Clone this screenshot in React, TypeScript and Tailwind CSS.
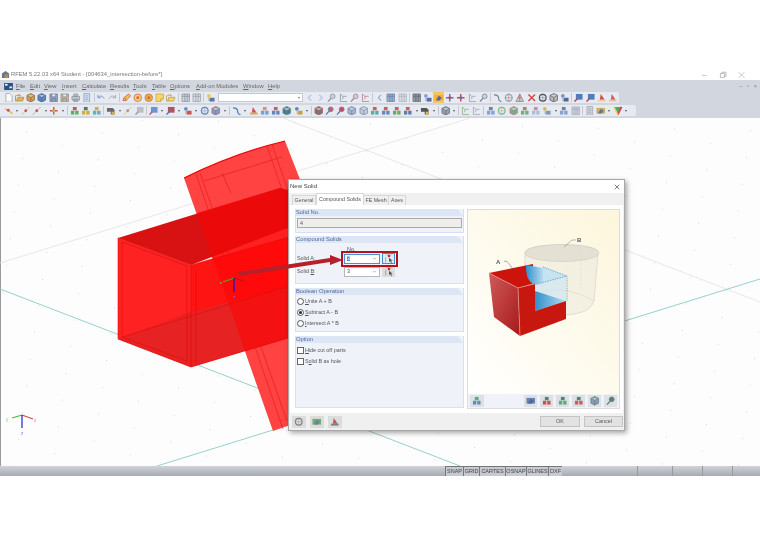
import { ReactNode } from "react";

const MENUS: [string, string][] = [
  ["File", "w-[14px]"],
  ["Edit", "w-[14px]"],
  ["View", "w-[18px]"],
  ["Insert", "w-[20px]"],
  ["Calculate", "w-[28px]"],
  ["Results", "w-[23px]"],
  ["Tools", "w-[19px]"],
  ["Table", "w-[18px]"],
  ["Options", "w-[26px]"],
  ["Add-on Modules", "w-[47px]"],
  ["Window", "w-[25px]"],
  ["Help", "w-[16px]"],
];

const ROW_ONE = [
  "page #fff #8a8f99", "fold #e0a92e #9a6a14", "box #c98a2a #7a4c10", "box #3f6fb5 #1f3f78", "save #7d8fb0 #4a5a78", "save #b5a68e #7d705c", "print #b7bcc6 #6d7480", "doc #cfe0f2 #5a7fb0", "|",
  "undo #5f82b8 #5f82b8", "undo2 #8d96a6 #8d96a6", "|",
  "pen #f0c020 #d02020", "disc #f2d040 #d04030", "disc #f09a20 #c05a10", "note #f4d24a #c08a10", "fold #f4d24a #a07a18", "|",
  "grid #c8ccd4 #6d7480", "grid #d6d9df #7d8490", "|", "node #f0c020 #3a5a90",
  "combo",
  "left #9ab4e0 #9ab4e0", "right #9ab4e0 #9ab4e0", "zoom #c8ccd8 #6d7a94", "corner #aab2c2 #6d7a94", "zoom #d8c0c8 #8d6a80", "corner #c8a8b0 #a06070", "|",
  "left #7a94c8 #3f5f98", "grid #8aa0c8 #42608f", "grid #d4d8e0 #9aa2b0", "|",
  "grid #7d8490 #3c424c", "node #6a8fe0 #3050a0", "sel #f0a830 #2a52b0", "cross #3058b0 #c02020", "cross #c02020 #3058b0", "corner #b8bcc8 #808898", "zoom #c8ccd8 #5a6a88", "|",
  "curve #c0c4cc #60687a", "ring #7a9ad0 #c05050", "tri #c0c4cc #a04040", "x #d02020 #404040", "ring #222 #667", "box #a8a8a8 #444", "node #5a82c8 #2a4a8a", "|",
  "sq #2a62b8 #c02020", "sq #2a62b8 #c02020", "flag #c82020 #f0c0a0", "flag #d83030 #f0b0a0",
];

const ROW_TWO = [
  "dot #e8b020 #c03030", "d", "line #d0a020 #c03030", "line #58a040 #c03030", "d", "cross #c03030 #d0a020", "d", "|",
  "tree #38a040 #c03030", "tree #c8a020 #306030", "tree #40a0b0 #c8a020", "|", "beam #4a4a4a #d0a020", "d", "line #d0a020 #8a8a8a", "sq #b0b4bc #808898", "|",
  "sq #4a80d0 #c03030", "d", "sq #a03040 #3060a0", "d", "node #4080c0 #c03030", "d", "ring #3870b0 #7090b0", "box #5a90d0 #b04040", "d", "|",
  "curve #3a3a3a #2060b0", "d", "flag #c03030 #d0a020", "tree #5a90c8 #d08060", "tree #3a70b8 #c04040", "box #1f5aa0 #4a7a40", "node #3a70b8 #c09020", "d", "|",
  "box #5a5a5a #a04040", "zoom #c04050 #405a90", "zoom #d02030 #405a90", "box #98a8c8 #506890", "box #b8c0d0 #6878a0", "tree #30a090 #c04040", "tree #3a70b8 #c04040", "tree #40a040 #c04040", "tree #406090 #c04040", "d", "beam #303030 #d8b020", "d", "|",
  "box #80909c #405060", "d", "|", "corner #a0b0a0 #60a060", "corner #b0b4bc #8a92a0", "|",
  "tree #6a90d0 #4070a0", "ring #50b0a0 #d0a030", "box #50a080 #c07050", "tree #50a070 #907050", "tree #9ab4d8 #b08090", "node #d0b030 #6a80a8", "d", "tree #6a90d0 #4070a0", "grid #c4cad6 #8a94aa", "|",
  "doc #c8ccd4 #8a92a0", "sel #c8a040 #405a90", "d", "rain #20a040 #d02020", "d",
];

function Glyph({ kind, a, b }: { kind: string; a: string; b: string }) {
  const shapes: Record<string, ReactNode> = {
    page: <path d="M2 .5h4l2.500 2.500v6.500h-6.500z" fill={a} stroke={b} strokeWidth=".8" />,
    fold: <path d="M.5 3V8.500h7.500l1.500-4H3l-1 4M.5 3h1l1-1h3v1.500" fill={a} stroke={b} strokeWidth=".7" />,
    box: <path d="M5 .5l4 2v5l-4 2-4-2v-5zM1 2.500l4 2 4-2M5 4.500v5" fill={a} stroke={b} strokeWidth=".8" />,
    save: <path d="M1 1h8v8H1zM3 1v3h4V1M3 9V6h4v3" fill={a} stroke={b} strokeWidth=".7" />,
    print: <path d="M3 1h4v2.500H3zM1 3.500h8v4H1zM3 6.500h4V9H3z" fill={a} stroke={b} strokeWidth=".7" />,
    doc: <path d="M2 .5h6v9H2zM3.500 3h3M3.500 5h3M3.500 7h3" fill={a} stroke={b} strokeWidth=".7" />,
    undo: <path d="M2 2v3h3M2.300 5C3.500 2.500 7.500 2.500 8.500 6" fill="none" stroke={a} strokeWidth="1" />,
    undo2: <path d="M8 2v3H5M7.700 5C6.500 2.500 2.500 2.500 1.500 6" fill="none" stroke={a} strokeWidth="1" />,
    pen: <path d="M1 8l1-3 5-4 2 2-5 5zM2.500 5l2.500 3" fill={a} stroke={b} strokeWidth=".8" />,
    disc: <g><circle cx="5" cy="5" r="4" fill={a} stroke={b} strokeWidth=".8" /><circle cx="5" cy="5" r="1.500" fill={b} /></g>,
    note: <path d="M1 1h8v5l-3 3H1zM6 9V6h3" fill={a} stroke={b} strokeWidth=".7" />,
    grid: <path d="M1 1h8v8H1zM1 3.500h8M4 1v8M6.500 1v8" fill={a} stroke={b} strokeWidth=".7" />,
    node: <g><circle cx="3" cy="3" r="2" fill={a} /><rect x="4" y="5" width="5" height="4" fill={b} /><path d="M3 5v3h1" fill="none" stroke={b} strokeWidth=".6" /></g>,
    left: <path d="M6.500 2L3.500 5l3 3" fill="none" stroke={a} strokeWidth="1.100" />,
    right: <path d="M3.500 2l3 3-3 3" fill="none" stroke={a} strokeWidth="1.100" />,
    zoom: <g><circle cx="6" cy="3.500" r="2.500" fill={a} stroke={b} strokeWidth=".8" /><path d="M4.200 5.500L1 9" stroke={b} strokeWidth="1.300" /></g>,
    corner: <path d="M1.500 1v8h7M1.500 1l2 2M4 3.500h4M4 3.500v3" fill="none" stroke={b} strokeWidth=".8" />,
    sel: <g><rect x=".5" y="2" width="9" height="6" fill={a} /><path d="M2 8l3-5 3 2-2 3z" fill={b} /></g>,
    cross: <g><path d="M5 1v8M1 5h8" stroke={a} strokeWidth="1.500" /><circle cx="5" cy="5" r="1.500" fill={b} /></g>,
    curve: <path d="M1 2c3 0 5 1 5 4 0 2 2 3 3 3" fill="none" stroke={b} strokeWidth="1.300" />,
    ring: <g><circle cx="5" cy="5" r="3.500" fill="none" stroke={a} strokeWidth="1.200" /><path d="M5 .5v9M.5 5h9" stroke={b} strokeWidth=".6" /></g>,
    tri: <path d="M5 1l4 8H1zM5 1v8M3 5h4" fill={a} stroke={b} strokeWidth=".7" />,
    x: <path d="M1.500 1.500l7 7M8.500 1.500l-7 7" stroke={a} strokeWidth="1.500" />,
    sq: <g><rect x="2" y="1" width="7" height="6" fill={a} /><path d="M.5 9l3-3" stroke={b} strokeWidth="1.500" /></g>,
    flag: <g><path d="M4 1l4 6H3z" fill={a} /><rect x="1" y="7" width="8" height="2" fill={b} /></g>,
    dot: <g><path d="M1 3l4 2 4 3" stroke={a} strokeWidth="1.500" /><circle cx="4.500" cy="4.500" r="1.500" fill={b} /></g>,
    line: <g><path d="M1 9l8-8" stroke={a} strokeWidth="1" strokeDasharray="2 1" /><circle cx="5" cy="5" r="1.500" fill={b} /></g>,
    tree: <g><rect x="1" y="5" width="3.500" height="4" fill={a} /><rect x="5.500" y="5" width="3.500" height="4" fill={a} /><rect x="3" y="1" width="4" height="3.500" fill={b} /></g>,
    beam: <g><path d="M1 2h6l2 2v5H5V6H1z" fill={a} /><rect x="6" y="6" width="3" height="3" fill={b} /></g>,
    rain: <g><path d="M1 1h8L5 9z" fill={a} /><path d="M5 9l4-8" stroke={b} strokeWidth="2" /><path d="M1 1l4 8" stroke="#f0d020" strokeWidth="1.500" /></g>,
  };
  return (
    <svg viewBox="0 0 10 10" className="h-[9.500px] w-[9.500px] opacity-80">
      {shapes[kind]}
    </svg>
  );
}

function Toolbar({ items, className }: { items: string[]; className: string }) {
  return (
    <div className={`flex h-[11px] items-center rounded-r-[2px] bg-[#e7eaf0] pl-[3px] ${className}`}>
      {items.map((token, i) => {
        if (token === "|") {
          return (
            <span key={i} className="flex w-[3px] justify-center">
              <span className="h-[9px] w-px bg-[#c4c8d0]" />
            </span>
          );
        }
        if (token === "d") {
          return (
            <span key={i} className="flex w-[6px] justify-center">
              <span className="h-0 w-0 border-x-[1.500px] border-t-[2px] border-x-transparent border-t-[#555]" />
            </span>
          );
        }
        if (token === "combo") {
          return (
            <span key={i} className="mx-[1.400px] flex h-[9px] w-[85px] items-center justify-end border border-[#c4c8d0] bg-white pr-[2px]">
              <span className="h-0 w-0 border-x-[1.500px] border-t-[2px] border-x-transparent border-t-[#777]" />
            </span>
          );
        }
        const [kind, a, b] = token.split(" ");
        return (
          <span key={i} className={`flex h-[11px] w-[11.200px] items-center justify-center ${a === "#f0a830" ? "bg-[#f6c65e]" : ""}`}>
            <Glyph kind={kind} a={a} b={b} />
          </span>
        );
      })}
    </div>
  );
}

function Viewport() {
  const dots: ReactNode[] = [];
  for (let i = -24; i < 24; i++) {
    for (let j = -8; j < 16; j++) {
      const x = 674 - 40 * i - 4 * j;
      const y = 128 + 12.7 * i + 26.7 * j;
      if (x > 0 && x < 760 && y > 117 && y < 465) {
        dots.push(<rect key={`${i}-${j}`} x={x} y={y} width="1" height="1" fill="#d8d8d8" />);
      }
    }
  }
  const slanted = "M184 177Q235 152 285 140L322 235V420L287 425L273 430Z";
  return (
    <svg viewBox="0 117 760 348" className="absolute inset-0 h-full w-full">
      {dots}
      <rect x="0" y="117" width="1" height="348" fill="#9a9a9a" />
      <path d="M0 262L470 117" stroke="#e2e2e2" strokeWidth=".8" />
      <path d="M283 117L760 301" stroke="#e2e2e2" strokeWidth=".8" />
      <path d="M0 288L460 465" stroke="#8ccaca" strokeWidth=".9" />
      <path d="M157 465L760 278" stroke="#8ccaca" strokeWidth=".9" />
      <path d={slanted} fill="#ff4242" />
      <path d="M184 177Q235 152 285 140" fill="none" stroke="#f00000" strokeWidth="1.200" />
      <path d="M196 173L283 428M200 172L287 420M267 145L296 230M272 143L300 225M204 180L282 156M222 172L231 192" fill="none" stroke="#e81818" strokeWidth=".6" />
      <polygon points="118,237 280,187 345,205 191,264" fill="#d81212" />
      <polygon points="118,237 191,264 191,366 118,338" fill="#ff2222" />
      <polygon points="191,264 345,220 345,320 191,366" fill="#ff1414" />
      <polygon points="118,338 191,311 345,270 345,320 191,366" fill="#e62222" />
      <polygon points="197,212 280,187 345,205 345,320 245,350" fill="#ff0000" opacity=".5" />
      <path d="M118 237L191 264V366L118 338ZM191 264L345 220M191 366L345 320M122 241L187 265V360L122 336ZM122 336L345 268M196 268V362" fill="none" stroke="#e00c0c" strokeWidth=".6" />
      <path d="M234 277L223 281" stroke="#46b020" strokeWidth="1.200" />
      <path d="M234 277L244 280" stroke="#702020" strokeWidth=".6" />
      <path d="M234 277V291" stroke="#1a10d0" strokeWidth="1.200" />
      <rect x="233" y="295" width="2" height="2" fill="#9040c0" />
      <rect x="220" y="281" width="2" height="2" fill="#60a020" />
      <path d="M22 414L12 417" stroke="#40c040" strokeWidth="1.200" />
      <path d="M22 414L33 418" stroke="#e04040" strokeWidth="1.200" />
      <path d="M22 414V427" stroke="#2020d0" strokeWidth="1.200" />
      <text x="6" y="420" fontSize="4.500" fill="#70d070">y</text>
      <text x="34" y="421" fontSize="4.500" fill="#f07070">x</text>
      <text x="21" y="434" fontSize="4.500" fill="#7070e0">z</text>
    </svg>
  );
}

function Panel({ title, className, children }: { title: string; className: string; children?: ReactNode }) {
  return (
    <section className={`relative border-x border-b border-[#d7def5] bg-[#eff3f9] ${className}`}>
      <h3 className="h-[7px] bg-[#dce6f5] text-[5.800px] font-normal leading-[7px] text-[#4a6a9a] [clip-path:polygon(0_0,97%_0,100%_100%,0_100%)]">
        {title}
      </h3>
      {children}
    </section>
  );
}

function PickIcon() {
  return (
    <svg viewBox="0 0 12 12" className="h-[10px] w-[10px]">
      <path d="M2 1l8 0" stroke="#999" strokeWidth=".6" />
      <circle cx="6" cy="2.500" r="1.500" fill="#c02828" />
      <path d="M6 4.500v5l1.500-1 1 2.500 1-.5-1-2.500h2z" fill="#555" />
      <path d="M2 10V4" stroke="#888" strokeWidth=".8" />
    </svg>
  );
}

function Combo({ value, focused }: { value: string; focused?: boolean }) {
  return (
    <span className={`flex h-[10px] w-[36px] items-center justify-between border bg-white pl-[2px] pr-[2px] leading-none ${focused ? "border-[#4a90d8]" : "border-[#b8b8b8]"}`}>
      <span className={focused ? "bg-[#3a8fe0] text-white" : ""}>{value}</span>
      <svg viewBox="0 0 6 4" className="h-[3px] w-[5px]">
        <path d="M1 1l2 2 2-2" fill="none" stroke="#888" strokeWidth=".8" />
      </svg>
    </span>
  );
}

function Radio({ accel, rest, on }: { accel: string; rest: string; on?: boolean }) {
  return (
    <label className="flex h-[11px] items-center gap-px">
      <span className="flex h-[7px] w-[7px] items-center justify-center rounded-full border border-[#555] bg-white">
        {on && <span className="h-[3px] w-[3px] rounded-full bg-[#222]" />}
      </span>
      <span>
        <u>{accel}</u>
        {rest}
      </span>
    </label>
  );
}

function Check({ accel, rest, before }: { accel: string; rest: string; before?: string }) {
  return (
    <label className="flex h-[11px] items-center gap-px">
      <span className="h-[7px] w-[7px] border border-[#666] bg-white" />
      <span>
        {before}
        <u>{accel}</u>
        {rest}
      </span>
    </label>
  );
}

function Illustration() {
  return (
    <svg viewBox="468 209 151 184" className="h-full w-full">
      <defs>
        <linearGradient id="paper" x1="1" y1="0" x2="0" y2="1">
          <stop offset="0" stopColor="#fdf6dc" />
          <stop offset=".65" stopColor="#fefcf2" />
          <stop offset="1" stopColor="#ffffff" />
        </linearGradient>
        <linearGradient id="side" x1="0" y1="0" x2="1" y2="1">
          <stop offset="0" stopColor="#cf5a5a" />
          <stop offset="1" stopColor="#a81818" />
        </linearGradient>
        <linearGradient id="cut" x1="0" y1="0" x2="1" y2="0">
          <stop offset="0" stopColor="#2f8fcc" />
          <stop offset="1" stopColor="#b6dcf0" />
        </linearGradient>
      </defs>
      <rect x="468" y="209" width="151" height="184" fill="url(#paper)" />
      <path d="M525 252V296Q532 314 560 314Q590 314 594 300L598 252Q598 244 562 244Q525 244 525 252Z" fill="#ece9dd" fillOpacity=".6" stroke="#d4d2c8" strokeWidth=".7" />
      <ellipse cx="562" cy="252" rx="37" ry="8.500" fill="#e4e1d4" stroke="#cfcdc2" strokeWidth=".7" />
      <path d="M581 246V288" stroke="#d8d6cc" strokeWidth=".6" strokeDasharray="1.500 1" />
      <path d="M528 296Q560 280 594 300" fill="none" stroke="#d8d6cc" strokeWidth=".6" />
      <polygon points="489,272 533,263 533,283 518,287" fill="#cc140c" />
      <path d="M526 264L543 267V284L533 283Q525 278 526 264Z" fill="url(#cut)" />
      <polygon points="543,266 567,275 533,285 543,284" fill="#bfe0f2" fillOpacity=".85" />
      <polygon points="535,283 566,275 566,300 535,310" fill="#cfe6f2" fillOpacity=".7" />
      <polygon points="535,290 566,300 535,310" fill="url(#cut)" />
      <polygon points="518,287 535,283 535,310 566,300 566,318 520,335" fill="#c6180f" />
      <polygon points="489,272 518,287 520,335 494,316" fill="url(#side)" />
      <path d="M489 272L518 287L520 335M518 287L533 283" fill="none" stroke="#e8a8a0" strokeWidth=".6" />
      <path d="M543 266L567 275V300M533 284L567 275" fill="none" stroke="#2f86c6" strokeWidth=".6" strokeDasharray="1.500 1" />
      <path d="M504 260C510 260 510 267 514 268" fill="none" stroke="#555" strokeWidth=".5" />
      <path d="M564 246L572 239H576" fill="none" stroke="#777" strokeWidth=".5" />
      <text x="496" y="263" fontSize="6" fontWeight="700" fill="#555" fontFamily="Liberation Sans, sans-serif">A</text>
      <text x="577" y="241" fontSize="6" fontWeight="700" fill="#555" fontFamily="Liberation Sans, sans-serif">B</text>
    </svg>
  );
}

function Dialog() {
  const strip = ["#4070a8", "#c03030", "#40a060", "#c04040", "#7a8aa8", "#505a70"];
  return (
    <div className="absolute left-[288px] top-[61px] flex h-[252px] w-[337px] flex-col border border-[#a8a8a8] bg-[#f0f0f0] text-[5.400px] text-[#555] shadow-[2px_2px_5px_rgba(0,0,0,0.35)]">
      <div className="flex h-[13px] items-center justify-between bg-white pl-[1px] pr-[4px] text-[6px] text-[#444]">
        <span>New Solid</span>
        <svg viewBox="0 0 8 8" className="h-[6px] w-[6px]">
          <path d="M1 1l6 6M7 1l-6 6" stroke="#444" strokeWidth=".9" />
        </svg>
      </div>
      <div className="flex h-[12px] items-end whitespace-nowrap pl-[3px] text-[5.300px]">
        <span className="flex h-[10px] w-[24px] items-center justify-center border border-b-0 border-[#d8d8d8] bg-[#f0f0f0]">General</span>
        <span className="flex h-[12px] w-[48px] items-center justify-center border border-b-0 border-[#d8d8d8] bg-white">Compound Solids</span>
        <span className="flex h-[10px] w-[25px] items-center justify-center border border-b-0 border-l-0 border-[#d8d8d8] bg-[#f0f0f0]">FE Mesh</span>
        <span className="flex h-[10px] w-[17px] items-center justify-center border border-b-0 border-l-0 border-[#d8d8d8] bg-[#f0f0f0]">Axes</span>
      </div>
      <div className="mx-[1px] flex h-[208px] gap-[3px] bg-white pl-[5px] pt-[4px]">
        <div className="flex w-[169px] flex-col gap-[3px]">
          <Panel title="Solid No." className="h-[24px]">
            <div className="mx-px mt-[2px] flex h-[10px] items-center border border-[#aaa] bg-[#eeeeea] pl-[2px]">4</div>
          </Panel>
          <Panel title="Compound Solids" className="mb-px h-[48px]">
            <div className="h-[9px] pl-[51px] pt-[3px] leading-[6px]"><u>N</u>o.</div>
            <div className="mt-px flex flex-col gap-[2px] pl-[1px]">
              <div className="flex h-[11px] items-center">
                <span className="w-[47px]">Solid <u>A</u>:</span>
                <Combo value="3" focused />
                <span className="ml-[2px] flex h-[11px] w-[13px] items-center justify-center border border-[#3d8ed8] bg-[#dcecf8]">
                  <PickIcon />
                </span>
              </div>
              <div className="flex h-[11px] items-center">
                <span className="w-[47px]">Solid <u>B</u>:</span>
                <Combo value="3" />
                <span className="ml-[2px] flex h-[11px] w-[13px] items-center justify-center bg-[#dcdcdc]">
                  <PickIcon />
                </span>
              </div>
            </div>
            <span className="absolute left-[45px] top-[15px] h-[16px] w-[57px] border-2 border-[#b5121b]" />
          </Panel>
          <Panel title="Boolean Operation" className="mb-px h-[44px]">
            <div className="pl-[1px] pt-[1px]">
              <Radio accel="U" rest="nite A + B" />
              <Radio accel="S" rest="ubtract A - B" on />
              <Radio accel="I" rest="ntersect A * B" />
            </div>
          </Panel>
          <Panel title="Option" className="h-[72px]">
            <div className="pl-[1px] pt-[2px]">
              <Check accel="H" rest="ide cut off parts" />
              <Check before="S" accel="o" rest="lid B as hole" />
            </div>
          </Panel>
        </div>
        <div className="flex h-[200px] w-[153px] flex-col border border-[#dcdcdc] bg-[#eff3f9]">
          <div className="h-[184px] overflow-hidden">
            <Illustration />
          </div>
          <div className="flex flex-1 items-center pl-[2px] pr-[2px]">
            <span className="flex h-[12px] w-[14px] items-center justify-center bg-[#dde1e6]">
              <Glyph kind="tree" a="#3a80a0" b="#40a060" />
            </span>
            <div className="ml-auto flex gap-[3px]">
              {strip.map((c, i) => (
                <span key={i} className="flex h-[12px] w-[13px] items-center justify-center bg-[#dde1e6]">
                  <Glyph kind={i === 0 ? "sel" : i === 4 ? "box" : i === 5 ? "zoom" : "tree"} a={c} b={i === 0 ? "#2a4a80" : "#3a6a50"} />
                </span>
              ))}
            </div>
          </div>
        </div>
      </div>
      <div className="flex flex-1 items-center justify-between pl-[3px] pr-[1px]">
        <div className="flex gap-[4px]">
          <span className="flex h-[12px] w-[14px] items-center justify-center bg-[#dcdcdc]">
            <Glyph kind="ring" a="#666" b="#999" />
          </span>
          <span className="flex h-[12px] w-[14px] items-center justify-center bg-[#dcdcdc]">
            <Glyph kind="sel" a="#50a060" b="#5a6a80" />
          </span>
          <span className="flex h-[12px] w-[14px] items-center justify-center bg-[#dcdcdc]">
            <Glyph kind="flag" a="#c03030" b="#667" />
          </span>
        </div>
        <div className="flex gap-[4px] text-[5.400px]">
          <button type="button" className="h-[11px] w-[40px] border border-[#c4c4c4] bg-[#e2e2e2]">OK</button>
          <button type="button" className="h-[11px] w-[39px] border border-[#c4c4c4] bg-[#e2e2e2]">Cancel</button>
        </div>
      </div>
    </div>
  );
}

export default function App() {
  const statusKeys: [string, string][] = [
    ["SNAP", "w-[18px]"],
    ["GRID", "w-[16px]"],
    ["CARTES", "w-[26px]"],
    ["OSNAP", "w-[21px]"],
    ["GLINES", "w-[22px]"],
    ["DXF", "w-[14px]"],
  ];
  return (
    <div className="flex h-[545px] w-[760px] flex-col overflow-hidden bg-white pt-[69px] font-['Liberation_Sans',Arial,sans-serif] [filter:blur(0.3px)]">
      <div className="flex h-[11px] items-center bg-white pl-[1px] pr-[9px] text-[5.800px] text-[#7a7a7a]">
        <svg viewBox="0 0 10 10" className="mr-[1px] h-[9px] w-[9px]">
          <path d="M1 9V4l4-3 4 3v5z" fill="#5a7aa0" />
          <path d="M4 9V5h4v4z" fill="#c88a30" />
        </svg>
        <span>RFEM 5.22.03 x64 Student - [004634_intersection-before*]</span>
        <svg viewBox="0 0 60 10" className="ml-auto h-[8px] w-[50px]">
          <path d="M0 5.500h6" stroke="#aaa" strokeWidth=".8" />
          <path d="M23 3h5v5h-5zM25 3V1.500h5v5h-2" fill="none" stroke="#999" strokeWidth=".8" />
          <path d="M46 1.500l7 7M53 1.500l-7 7" stroke="#aaa" strokeWidth=".8" />
        </svg>
      </div>
      <nav className="flex h-[12px] items-center whitespace-nowrap bg-[#d2d6de] pl-[4px] text-[5.800px] text-[#666]">
        <svg viewBox="0 0 10 8" className="mr-[3px] h-[7px] w-[9px]">
          <rect width="10" height="8" fill="#2c4f86" />
          <rect x="1" y="1" width="3" height="2" fill="#e8eef8" />
          <rect x="6" y="4" width="3" height="2" fill="#e8eef8" />
        </svg>
        {MENUS.map(([name, w]) => (
          <span key={name} className={w}>
            <u>{name[0]}</u>
            {name.slice(1)}
          </span>
        ))}
        <span className="ml-auto mr-[3px] flex gap-[5px] text-[5px] leading-none text-[#777]">
          <span>–</span>
          <span>▫</span>
          <span>×</span>
        </span>
      </nav>
      <div className="flex flex-col gap-[2px] bg-[#d2d6de] pb-[2px]">
        <Toolbar items={ROW_ONE} className="w-[619px]" />
        <Toolbar items={ROW_TWO} className="w-[636px]" />
      </div>
      <main className="relative h-[348px] w-[760px] overflow-hidden bg-[#fdfdfd]">
        <Viewport />
        <Dialog />
        <svg viewBox="0 117 760 348" className="pointer-events-none absolute inset-0 h-full w-full">
          <polygon points="238,271 330,257 330,254 343,259 330,264 330,261 240,275" fill="#b5202a" />
        </svg>
      </main>
      <footer className="flex h-[10px] items-stretch bg-gradient-to-b from-[#d0d3d9] to-[#a6aab2] pl-[445px] text-[5.500px] text-[#444]">
        {statusKeys.map(([key, w]) => (
          <span key={key} className={`${w} flex items-center justify-center border-l border-t border-[#777] bg-[#c6c9cf]`}>
            {key}
          </span>
        ))}
        <span className="ml-[75px] w-px bg-[#999]" />
        <span className="ml-[34px] w-px bg-[#999]" />
        <span className="ml-[29px] w-px bg-[#999]" />
        <span className="ml-[29px] w-px bg-[#999]" />
      </footer>
    </div>
  );
}
